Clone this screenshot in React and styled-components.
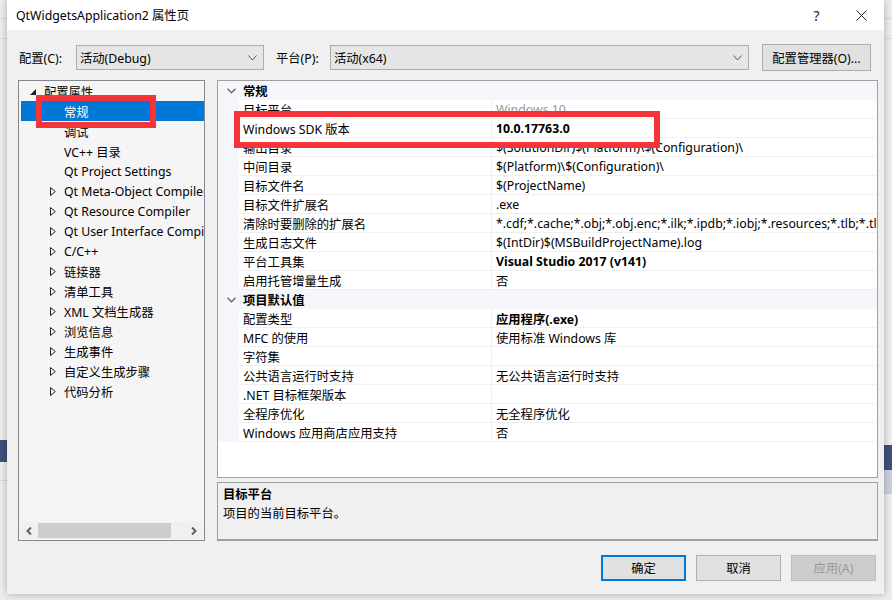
import React from "react";
import styled, { createGlobalStyle } from "styled-components";

const Global = createGlobalStyle`
  html, body { margin: 0; padding: 0; }
  body {
    width: 892px; height: 600px; overflow: hidden;
    font-family: "Noto Sans", "Noto Sans CJK SC", sans-serif;
    font-size: 12.3px; color: #000;
  }
  * { box-sizing: border-box; }
`;

const Page = styled.div`
  position: relative;
  width: 892px;
  height: 600px;
  overflow: hidden;
  padding-left: 7px;
  background:
    linear-gradient(#3e5079, #3e5079) 0 440px / 8px 22px no-repeat,
    linear-gradient(#d6d6d6, #d6d6d6) 0 480px / 8px 1px no-repeat,
    linear-gradient(#3e5079, #3e5079) 884px 445px / 8px 25px no-repeat,
    linear-gradient(#c9d0dc, #c9d0dc) 884px 470px / 8px 24px no-repeat,
    linear-gradient(#d8d8d8, #d8d8d8) 0 18px / 892px 1px no-repeat,
    linear-gradient(#d8d8d8, #d8d8d8) 0 38px / 892px 1px no-repeat,
    #ececec;
`;

const Dialog = styled.div`
  width: 877px;
  height: 594px;
  background: #f0f0f0;
  box-shadow: 0 0 7px rgba(0, 0, 0, 0.28);
  display: flex;
  flex-direction: column;
`;

const TitleBar = styled.div`
  height: 30px;
  background: #fff;
  display: flex;
  align-items: center;
  padding-left: 9px;
`;

const TitleText = styled.div`
  flex: 1;
  color: #000;
`;

const TitleBtn = styled.div`
  width: 45px;
  height: 30px;
  display: flex;
  align-items: center;
  justify-content: center;
  font-size: 14px;
  color: #222;
`;

const ConfigRow = styled.div`
  display: flex;
  align-items: center;
  height: 27px;
  margin-top: 14px;
  padding-left: 12px;
`;

const Label = styled.div`
  width: ${(p) => p.w}px;
  white-space: nowrap;
`;

const Select = styled.div`
  width: ${(p) => p.w}px;
  height: 25px;
  border: 1px solid #adadad;
  background: #e6e6e6;
  display: flex;
  align-items: center;
  padding: 0 6px 0 3px;
  margin-right: ${(p) => p.mr || 0}px;
`;

const SelectText = styled.div`
  flex: 1;
`;

const Button = styled.div`
  width: ${(p) => p.w || 85}px;
  height: ${(p) => p.h || 26}px;
  display: flex;
  align-items: center;
  justify-content: center;
  white-space: nowrap;
  background: ${(p) => (p.disabled ? "#cccccc" : "#e1e1e1")};
  color: ${(p) => (p.disabled ? "#9a9a9a" : "#000")};
  border: ${(p) =>
    p.primary ? "2px solid #0078d7" : p.disabled ? "1px solid #bfbfbf" : "1px solid #adadad"};
`;

const Main = styled.div`
  display: flex;
  gap: 12px;
  height: 461px;
  margin-top: 9px;
  padding-left: 11px;
`;

const Tree = styled.div`
  width: 187px;
  height: 100%;
  border: 1px solid #828790;
  background: #f5f5f5;
  display: flex;
  flex-direction: column;
`;

const TreeList = styled.div`
  flex: 1;
  overflow: hidden;
`;

const TreeRow = styled.div`
  height: 20px;
  margin-left: 2px;
  padding-top: 1px;
  display: flex;
  align-items: center;
  white-space: nowrap;
  overflow: hidden;
  background: ${(p) => (p.selected ? "#0078d7" : "transparent")};
  color: ${(p) => (p.selected ? "#fff" : "#000")};
`;

const Expander = styled.div`
  width: ${(p) => p.w}px;
  flex: none;
  display: flex;
  justify-content: flex-end;
  padding-right: ${(p) => p.pr}px;
`;

const HScroll = styled.div`
  height: 17px;
  margin: 0 1px 1px 1px;
  background: #f0f0f0;
  display: flex;
  align-items: center;
`;

const ScrollArrow = styled.div`
  width: 18px;
  display: flex;
  justify-content: center;
`;

const Thumb = styled.div`
  width: 133px;
  height: 15px;
  background: #cdcdcd;
`;

const Spacer = styled.div`
  flex: 1;
`;

const RightCol = styled.div`
  width: 661px;
  display: flex;
  flex-direction: column;
  gap: 4px;
`;

const Grid = styled.div`
  height: 398px;
  border: 1px solid #a0a0a0;
  background: #fff;
  overflow: hidden;
`;

const CatRow = styled.div`
  height: 19px;
  padding-top: 1px;
  display: flex;
  align-items: center;
  background: #f4f6f9;
  font-weight: bold;
`;

const CatChevron = styled.div`
  width: 25px;
  display: flex;
  justify-content: center;
  padding-left: 2px;
`;

const PropRow = styled.div`
  height: 19px;
  display: grid;
  grid-template-columns: 21px 252px 1fr;
  border-bottom: 1px solid #f0f0f0;
`;

const Gutter = styled.div`
  background: #f4f6f9;
  margin-bottom: -1px;
`;

const Cell = styled.div`
  padding: 1px 0 0 4px;
  display: flex;
  align-items: center;
  white-space: nowrap;
  overflow: hidden;
  font-weight: ${(p) => (p.bold ? "bold" : "normal")};
  color: ${(p) => (p.dim ? "#9a9a9a" : "#000")};
  border-left: ${(p) => (p.sep ? "1px solid #f0f0f0" : "none")};
`;

const Desc = styled.div`
  height: 59px;
  border: 1px solid #a0a0a0;
  border-bottom: 2px solid #a0a0a0;
  background: #f0f0f0;
  padding: 2px 5px;
`;

const DescTitle = styled.div`
  font-weight: bold;
  line-height: 19px;
`;

const DescText = styled.div`
  line-height: 19px;
`;

const Footer = styled.div`
  display: flex;
  justify-content: flex-end;
  gap: 10px;
  margin-top: 14px;
  padding-right: 8px;
`;

const Annot = styled.div`
  position: absolute;
  left: ${(p) => p.x}px;
  top: ${(p) => p.y}px;
  width: ${(p) => p.w}px;
  height: ${(p) => p.h}px;
  border: 6px solid #f5333a;
  pointer-events: none;
`;

const Chevron = () => (
  <svg width="9" height="6" viewBox="0 0 9 6">
    <polyline points="0.5,0.5 4.5,5 8.5,0.5" fill="none" stroke="#555" strokeWidth="1" />
  </svg>
);

const Collapsed = () => (
  <svg width="6" height="9" viewBox="0 0 6 9">
    <polygon points="0.5,0.5 5.3,4.5 0.5,8.5" fill="none" stroke="#1e1e1e" strokeWidth="1" />
  </svg>
);

const Expanded = () => (
  <svg width="6" height="6" viewBox="0 0 6 6">
    <polygon points="6,0 6,6 0,6" fill="#1e1e1e" />
  </svg>
);

const CatChev = () => (
  <svg width="9" height="6" viewBox="0 0 9 6">
    <polyline points="0.5,0.7 4.5,4.8 8.5,0.7" fill="none" stroke="#666" strokeWidth="1.3" />
  </svg>
);

const CloseX = () => (
  <svg width="11" height="11" viewBox="0 0 11 11">
    <path d="M0.5 0.5 L10.5 10.5 M10.5 0.5 L0.5 10.5" stroke="#222" strokeWidth="1" />
  </svg>
);

const ArrowL = () => (
  <svg width="6" height="8" viewBox="0 0 6 8">
    <polyline points="5,0.5 1.5,4 5,7.5" fill="none" stroke="#606060" strokeWidth="2" />
  </svg>
);
const ArrowR = () => (
  <svg width="6" height="8" viewBox="0 0 6 8">
    <polyline points="1,0.5 4.5,4 1,7.5" fill="none" stroke="#606060" strokeWidth="2" />
  </svg>
);

const treeItems = [
  { t: "调试" },
  { t: "VC++ 目录" },
  { t: "Qt Project Settings" },
  { t: "Qt Meta-Object Compiler", c: true },
  { t: "Qt Resource Compiler", c: true },
  { t: "Qt User Interface Compiler", c: true },
  { t: "C/C++", c: true },
  { t: "链接器", c: true },
  { t: "清单工具", c: true },
  { t: "XML 文档生成器", c: true },
  { t: "浏览信息", c: true },
  { t: "生成事件", c: true },
  { t: "自定义生成步骤", c: true },
  { t: "代码分析", c: true },
];

const general = [
  ["目标平台", "Windows 10", { dim: true }],
  ["Windows SDK 版本", "10.0.17763.0", { bold: true }],
  ["输出目录", "$(SolutionDir)$(Platform)\\$(Configuration)\\"],
  ["中间目录", "$(Platform)\\$(Configuration)\\"],
  ["目标文件名", "$(ProjectName)"],
  ["目标文件扩展名", ".exe"],
  ["清除时要删除的扩展名", "*.cdf;*.cache;*.obj;*.obj.enc;*.ilk;*.ipdb;*.iobj;*.resources;*.tlb;*.tli;*.tlh;*.tmp;*.rsp"],
  ["生成日志文件", "$(IntDir)$(MSBuildProjectName).log"],
  ["平台工具集", "Visual Studio 2017 (v141)", { bold: true }],
  ["启用托管增量生成", "否"],
];

const defaults = [
  ["配置类型", "应用程序(.exe)", { bold: true }],
  ["MFC 的使用", "使用标准 Windows 库"],
  ["字符集", ""],
  ["公共语言运行时支持", "无公共语言运行时支持"],
  [".NET 目标框架版本", ""],
  ["全程序优化", "无全程序优化"],
  ["Windows 应用商店应用支持", "否"],
];

const Rows = ({ rows }) =>
  rows.map(([n, v, o = {}]) => (
    <PropRow key={n}>
      <Gutter />
      <Cell>{n}</Cell>
      <Cell sep bold={o.bold} dim={o.dim}>
        {v}
      </Cell>
    </PropRow>
  ));

export default function App() {
  return (
    <Page>
      <Global />
      <Dialog>
        <TitleBar>
          <TitleText>QtWidgetsApplication2 属性页</TitleText>
          <TitleBtn>?</TitleBtn>
          <TitleBtn>
            <CloseX />
          </TitleBtn>
        </TitleBar>

        <ConfigRow>
          <Label w={57}>配置(C):</Label>
          <Select w={188} mr={12}>
            <SelectText>活动(Debug)</SelectText>
            <Chevron />
          </Select>
          <Label w={54}>平台(P):</Label>
          <Select w={419} mr={13}>
            <SelectText>活动(x64)</SelectText>
            <Chevron />
          </Select>
          <Button w={109} h={27}>配置管理器(O)...</Button>
        </ConfigRow>

        <Main>
          <Tree>
            <TreeList>
              <TreeRow>
                <Expander w={17} pr={2}>
                  <Expanded />
                </Expander>
                <span style={{ marginLeft: 6 }}>配置属性</span>
              </TreeRow>
              <TreeRow selected>
                <Expander w={43} pr={0} />
                常规
              </TreeRow>
              {treeItems.map((it) => (
                <TreeRow key={it.t}>
                  <Expander w={43} pr={8}>
                    {it.c ? <Collapsed /> : null}
                  </Expander>
                  {it.t}
                </TreeRow>
              ))}
            </TreeList>
            <HScroll>
              <ScrollArrow>
                <ArrowL />
              </ScrollArrow>
              <Thumb />
              <Spacer />
              <ScrollArrow>
                <ArrowR />
              </ScrollArrow>
            </HScroll>
          </Tree>

          <RightCol>
            <Grid>
              <CatRow>
                <CatChevron>
                  <CatChev />
                </CatChevron>
                常规
              </CatRow>
              <Rows rows={general} />
              <CatRow>
                <CatChevron>
                  <CatChev />
                </CatChevron>
                项目默认值
              </CatRow>
              <Rows rows={defaults} />
            </Grid>
            <Desc>
              <DescTitle>目标平台</DescTitle>
              <DescText>项目的当前目标平台。</DescText>
            </Desc>
          </RightCol>
        </Main>

        <Footer>
          <Button primary>确定</Button>
          <Button>取消</Button>
          <Button disabled>应用(A)</Button>
        </Footer>
      </Dialog>

      <Annot x={36} y={95} w={120} h={33} />
      <Annot x={234} y={111} w={426} h={37} />
    </Page>
  );
}
